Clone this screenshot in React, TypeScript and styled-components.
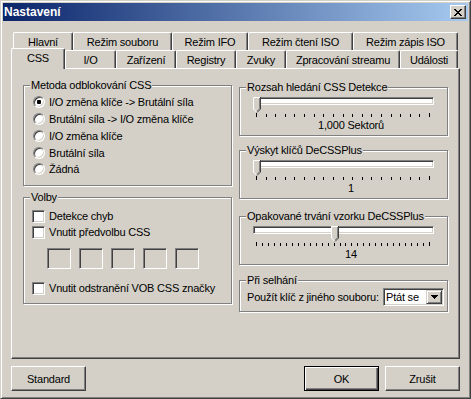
import React from 'react'
import styled, { createGlobalStyle, css } from 'styled-components'

const face = '#d4d0c8'
const shadow = '#808080'
const dark = '#404040'

const GlobalStyle = createGlobalStyle`
  body {
    margin: 0;
    background: ${face};
    font-family: 'Liberation Sans', Arial, sans-serif;
    font-size: 11px;
    letter-spacing: -0.2px;
    color: #000;
  }
`

const Window = styled.div`
  width: 471px;
  height: 399px;
  box-sizing: border-box;
  background: ${face};
  border: 1px solid;
  border-color: ${face} ${dark} ${dark} ${face};
  box-shadow: inset 1px 1px #fff, inset -1px -1px ${shadow};
  padding: 2px;
  display: flex;
  flex-direction: column;
`

const TitleBar = styled.div`
  height: 18px;
  flex: none;
  display: flex;
  align-items: center;
  justify-content: space-between;
  padding: 0 2px 0 1px;
  background: linear-gradient(to right, #0a246a, #a6caf0);
`

const Title = styled.span`
  color: #fff;
  font-weight: bold;
  font-size: 12px;
  letter-spacing: 0;
`

const CloseButton = styled.div`
  width: 16px;
  height: 14px;
  box-sizing: border-box;
  background: ${face};
  border: 1px solid;
  border-color: #fff ${dark} ${dark} #fff;
  box-shadow: inset -1px -1px ${shadow};
  display: flex;
  align-items: center;
  justify-content: center;
`

const Body = styled.div`
  flex: 1;
  display: flex;
  flex-direction: column;
  padding: 11px 8px 0 8px;
`

const TabRow = styled.div`
  display: flex;
  height: 18px;
  padding-left: 2px;
`

const Tab = styled.div<{ $w: number; $selected?: boolean }>`
  width: ${p => p.$w}px;
  flex: none;
  box-sizing: border-box;
  background: ${face};
  border-top: 1px solid #fff;
  border-left: 1px solid #fff;
  border-right: 1px solid ${dark};
  border-radius: 2px 2px 0 0;
  box-shadow: inset -1px 0 ${shadow};
  display: flex;
  align-items: center;
  justify-content: center;
  white-space: nowrap;
  ${p =>
    p.$selected &&
    css`
      position: relative;
      z-index: 1;
      height: 21px;
      margin: -2px 0 0 -2px;
      padding-bottom: 3px;
    `}
`

const Panel = styled.div`
  height: 291px;
  flex: none;
  box-sizing: border-box;
  border: 1px solid;
  border-color: #fff ${dark} ${dark} #fff;
  box-shadow: inset -1px -1px ${shadow};
  display: grid;
  grid-template-columns: 209px 209px;
  column-gap: 7px;
  align-items: start;
  padding: 16px 0 0 11px;
`

const Column = styled.div<{ $mt?: number }>`
  display: flex;
  flex-direction: column;
  margin-top: ${p => p.$mt || 0}px;
`

const Group = styled.div<{ $h: number; $mt?: number }>`
  position: relative;
  box-sizing: border-box;
  height: ${p => p.$h}px;
  margin-top: ${p => p.$mt || 0}px;
  border: 1px solid ${shadow};
  box-shadow: inset 1px 1px #fff, 1px 1px #fff;
`

const GroupTitle = styled.span`
  position: absolute;
  top: -7px;
  left: 6px;
  padding: 0 1px;
  line-height: 13px;
  background: ${face};
  white-space: nowrap;
`

const OptionList = styled.div<{ $pt: number }>`
  display: flex;
  flex-direction: column;
  padding: ${p => p.$pt}px 0 0 8px;
`

const OptionRow = styled.div<{ $h: number; $gap: number }>`
  display: flex;
  align-items: center;
  height: ${p => p.$h}px;
  gap: ${p => p.$gap}px;
  white-space: nowrap;
`

const Radio = styled.span<{ $checked?: boolean }>`
  width: 12px;
  height: 12px;
  margin-left: 1px;
  box-sizing: border-box;
  border-radius: 50%;
  border: 1px solid;
  border-color: ${shadow} #fff #fff ${shadow};
  background: #fff;
  box-shadow: inset 1px 1px ${dark}, inset -1px -1px ${face};
  display: flex;
  align-items: center;
  justify-content: center;
  &::after {
    content: '';
    display: ${p => (p.$checked ? 'block' : 'none')};
    width: 4px;
    height: 4px;
    border-radius: 1px;
    background: #000;
  }
`

const Check = styled.span`
  width: 13px;
  height: 13px;
  box-sizing: border-box;
  border: 1px solid;
  border-color: ${shadow} #fff #fff ${shadow};
  background: #fff;
  box-shadow: inset 1px 1px ${dark}, inset -1px -1px ${face};
`

const EditRow = styled.div`
  display: flex;
  gap: 8px;
  margin: 8px 0 11px 15px;
`

const Edit = styled.div`
  width: 24px;
  height: 21px;
  box-sizing: border-box;
  border: 1px solid;
  border-color: ${shadow} #fff #fff ${shadow};
  box-shadow: inset 1px 1px ${dark}, inset -1px -1px ${face};
  background: ${face};
`

const SliderArea = styled.div`
  position: relative;
  height: 16px;
  margin: 9px 13px 0 13px;
`

const Track = styled.div`
  margin-top: 2px;
  height: 8px;
  box-sizing: border-box;
  border: 1px solid;
  border-color: ${shadow} #fff #fff ${shadow};
  box-shadow: inset 1px 1px ${dark}, inset -1px -1px ${face};
  background: #fff;
`

const Thumb = styled.svg`
  position: absolute;
  top: 0;
`

const Ticks = styled.svg`
  display: block;
  margin: 0 13px;
`

const SliderLabel = styled.div`
  margin: 2px 0 0 15px;
  line-height: 13px;
  text-align: center;
`

const FailRow = styled.div`
  display: flex;
  align-items: center;
  justify-content: space-between;
  padding: 7px 3px 0 7px;
  white-space: nowrap;
`

const Combo = styled.div`
  width: 61px;
  height: 18px;
  box-sizing: border-box;
  border: 1px solid;
  border-color: ${shadow} #fff #fff ${shadow};
  box-shadow: inset 1px 1px ${dark}, inset -1px -1px ${face};
  padding: 1px;
  background: #fff;
  display: flex;
  align-items: center;
  justify-content: space-between;
`

const ComboText = styled.span`
  padding-left: 1px;
`

const DropButton = styled.div`
  width: 16px;
  height: 14px;
  box-sizing: border-box;
  background: ${face};
  border: 1px solid;
  border-color: ${face} ${dark} ${dark} ${face};
  box-shadow: inset 1px 1px #fff, inset -1px -1px ${shadow};
  display: flex;
  align-items: center;
  justify-content: center;
`

const ButtonBar = styled.div`
  display: flex;
  gap: 6px;
  margin-top: 7px;
`

const Spacer = styled.div`
  flex: 1;
`

const PushButton = styled.button<{ $default?: boolean }>`
  width: 75px;
  height: 25px;
  padding: 0;
  font: inherit;
  letter-spacing: inherit;
  color: #000;
  background: ${face};
  border: 1px solid;
  border-color: #fff ${dark} ${dark} #fff;
  box-shadow: inset -1px -1px ${shadow}, inset 1px 1px ${face};
  ${p =>
    p.$default &&
    css`
      border-color: #000;
      box-shadow: inset 1px 1px #fff, inset -1px -1px ${dark}, inset -2px -2px ${shadow};
    `}
`

const rowOne = [
  { label: 'Hlavní', w: 60 },
  { label: 'Režim souboru', w: 99 },
  { label: 'Režim IFO', w: 76 },
  { label: 'Režim čtení ISO', w: 105 },
  { label: 'Režim zápis ISO', w: 105 },
]

const rowTwo = [
  { label: 'CSS', w: 54, selected: true },
  { label: 'I/O', w: 51 },
  { label: 'Zařízení', w: 60 },
  { label: 'Registry', w: 60 },
  { label: 'Zvuky', w: 50 },
  { label: 'Zpracování streamu', w: 114 },
  { label: 'Události', w: 58 },
]

const methods = [
  'I/O změna klíče -> Brutální síla',
  'Brutální síla -> I/O změna klíče',
  'I/O změna klíče',
  'Brutální síla',
  'Žádná',
]

const sliders = [
  { title: 'Rozsah hledání CSS Detekce', ticks: 19, pos: 0, label: '1,000 Sektorů', mt: 0 },
  { title: 'Výskyt klíčů DeCSSPlus', ticks: 19, pos: 0, label: '1', mt: 14 },
  { title: 'Opakované trvání vzorku DeCSSPlus', ticks: 30, pos: 13 / 29, label: '14', mt: 17 },
]

const TRACK_W = 181
const THUMB_W = 8

const CloseIcon = () => (
  <svg width="8" height="7" viewBox="0 0 8 7" shapeRendering="crispEdges">
    {Array.from({ length: 7 }).map((_, i) => (
      <React.Fragment key={i}>
        <rect x={i} y={i} width="2" height="1" fill="#000" />
        <rect x={6 - i} y={i} width="2" height="1" fill="#000" />
      </React.Fragment>
    ))}
  </svg>
)

const DownArrow = () => (
  <svg width="7" height="4" viewBox="0 0 7 4" shapeRendering="crispEdges">
    <rect x="0" y="0" width="7" height="1" fill="#000" />
    <rect x="1" y="1" width="5" height="1" fill="#000" />
    <rect x="2" y="2" width="3" height="1" fill="#000" />
    <rect x="3" y="3" width="1" height="1" fill="#000" />
  </svg>
)

const ThumbShape: React.FC<{ left: number }> = ({ left }) => (
  <Thumb width={THUMB_W} height="16" viewBox="0 0 8 16" style={{ left }}>
    <polygon points="0,0 8,0 8,12 4,16 0,12" fill={face} />
    <path d="M0.5 12 V0.5 H7" stroke="#fff" fill="none" />
    <path d="M0.5 12 L4 15.5" stroke="#fff" fill="none" />
    <path d="M7.5 0 V12 L4 15.5" stroke={dark} fill="none" />
    <path d="M6.5 1 V11.5 L4 14.2" stroke={shadow} fill="none" />
  </Thumb>
)

const TickMarks: React.FC<{ count: number }> = ({ count }) => {
  const span = TRACK_W - THUMB_W
  return (
    <Ticks width={TRACK_W} height="4" shapeRendering="crispEdges">
      {Array.from({ length: count }).map((_, i) => {
        const x = Math.round(THUMB_W / 2 + (i * span) / (count - 1)) - 0.5
        const long = i === 0 || i === count - 1
        return <line key={i} x1={x} x2={x} y1={long ? 0 : 1} y2={4} stroke="#000" />
      })}
    </Ticks>
  )
}

export default function App() {
  return (
    <>
      <GlobalStyle />
      <Window>
        <TitleBar>
          <Title>Nastavení</Title>
          <CloseButton>
            <CloseIcon />
          </CloseButton>
        </TitleBar>
        <Body>
          <TabRow>
            {rowOne.map(t => (
              <Tab key={t.label} $w={t.w}>
                {t.label}
              </Tab>
            ))}
          </TabRow>
          <TabRow>
            {rowTwo.map(t => (
              <Tab key={t.label} $w={t.w} $selected={t.selected}>
                {t.label}
              </Tab>
            ))}
          </TabRow>
          <Panel>
            <Column>
              <Group $h={101}>
                <GroupTitle>Metoda odblokování CSS</GroupTitle>
                <OptionList $pt={8}>
                  {methods.map((m, i) => (
                    <OptionRow key={m} $h={16.75} $gap={4}>
                      <Radio $checked={i === 0} />
                      {m}
                    </OptionRow>
                  ))}
                </OptionList>
              </Group>
              <Group $h={107} $mt={11}>
                <GroupTitle>Volby</GroupTitle>
                <OptionList $pt={10}>
                  <OptionRow $h={16} $gap={4}>
                    <Check />
                    Detekce chyb
                  </OptionRow>
                  <OptionRow $h={16} $gap={4}>
                    <Check />
                    Vnutit předvolbu CSS
                  </OptionRow>
                  <EditRow>
                    {[0, 1, 2, 3, 4].map(i => (
                      <Edit key={i} />
                    ))}
                  </EditRow>
                  <OptionRow $h={16} $gap={4}>
                    <Check />
                    Vnutit odstranění VOB CSS značky
                  </OptionRow>
                </OptionList>
              </Group>
            </Column>
            <Column $mt={2}>
              {sliders.map(s => (
                <Group key={s.title} $h={49} $mt={s.mt}>
                  <GroupTitle>{s.title}</GroupTitle>
                  <SliderArea>
                    <Track />
                    <ThumbShape left={Math.round(s.pos * (TRACK_W - THUMB_W))} />
                  </SliderArea>
                  <TickMarks count={s.ticks} />
                  <SliderLabel>{s.label}</SliderLabel>
                </Group>
              ))}
              <Group $h={32} $mt={15}>
                <GroupTitle>Při selhání</GroupTitle>
                <FailRow>
                  Použít klíč z jiného souboru:
                  <Combo>
                    <ComboText>Ptát se</ComboText>
                    <DropButton>
                      <DownArrow />
                    </DropButton>
                  </Combo>
                </FailRow>
              </Group>
            </Column>
          </Panel>
          <ButtonBar>
            <PushButton>Standard</PushButton>
            <Spacer />
            <PushButton $default>OK</PushButton>
            <PushButton>Zrušit</PushButton>
          </ButtonBar>
        </Body>
      </Window>
    </>
  )
}
